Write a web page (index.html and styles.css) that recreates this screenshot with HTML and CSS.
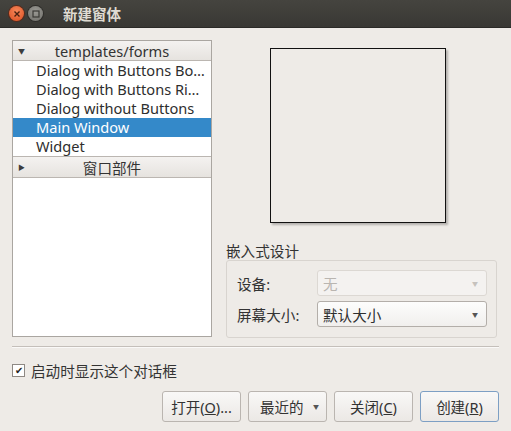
FILE: index.html
```html
<!DOCTYPE html>
<html lang="zh-CN">
<head>
    <meta charset="UTF-8">
    <title>新建窗体</title>
    <link rel="stylesheet" href="styles.css">
</head>
<body>

    <div class="titlebar">
        <span class="win-btn close">
            <svg width="8" height="8" viewBox="0 0 8 8"><path d="M1.5 1.5 L6.5 6.5 M6.5 1.5 L1.5 6.5" stroke="#4a2010" stroke-width="1.4"/></svg>
        </span>
        <span class="win-btn restore">
            <svg width="8" height="8" viewBox="0 0 8 8"><rect x="1" y="1" width="6" height="6" fill="none" stroke="#3a3935" stroke-width="1.2"/></svg>
        </span>
        <span class="title">新建窗体</span>
    </div>

    <div class="content">
        <div class="top">
            <div class="tree">
                <div class="tree-head">
                    <span class="arrow">&#9660;</span>
                    <span class="head-text">templates/forms</span>
                </div>
                <div class="tree-item">Dialog with Buttons Bo…</div>
                <div class="tree-item">Dialog with Buttons Ri…</div>
                <div class="tree-item">Dialog without Buttons</div>
                <div class="tree-item selected">Main Window</div>
                <div class="tree-item">Widget</div>
                <div class="tree-head">
                    <span class="arrow">&#9654;</span>
                    <span class="head-text">窗口部件</span>
                </div>
            </div>

            <div class="side">
                <div class="preview-wrap">
                    <div class="preview"></div>
                </div>
                <div class="group-title">嵌入式设计</div>
                <div class="group">
                    <div class="form-row">
                        <span class="label">设备:</span>
                        <div class="combo disabled">
                            <span>无</span>
                            <span class="drop">&#9660;</span>
                        </div>
                    </div>
                    <div class="form-row">
                        <span class="label">屏幕大小:</span>
                        <div class="combo">
                            <span>默认大小</span>
                            <span class="drop">&#9660;</span>
                        </div>
                    </div>
                </div>
            </div>
        </div>

        <div class="separator"></div>

        <label class="check-row">
            <span class="checkbox">&#10004;</span>
            <span>启动时显示这个对话框</span>
        </label>

        <div class="buttons">
            <button>打开(<u>O</u>)...</button>
            <button class="menu-btn"><span>最近的</span><span class="drop">&#9660;</span></button>
            <button>关闭(<u>C</u>)</button>
            <button class="default">创建(<u>R</u>)</button>
        </div>
    </div>

</body>
</html>
```

FILE: styles.css
```css
body {
    margin: 0;
    width: 511px;
    height: 431px;
    overflow: hidden;
    background-color: #eeebe7;
    font-family: "Noto Sans", "Noto Sans CJK SC", sans-serif;
    font-size: 14.6px;
    color: #3c3c3c;
}
.titlebar {
    height: 28px;
    display: flex;
    align-items: center;
    padding-left: 9px;
    background: linear-gradient(#45443f, #393834);
    border-bottom: 1px solid #2b2a27;
    box-sizing: border-box;
}
.win-btn {
    width: 15px;
    height: 15px;
    border-radius: 50%;
    display: flex;
    align-items: center;
    justify-content: center;
    margin-right: 4px;
}
.close {
    background: radial-gradient(circle at 50% 35%, #f6875a, #dd4d1f);
    box-shadow: 0 0 0 1px #5a2a1a;
}
.restore {
    background: radial-gradient(circle at 50% 35%, #9a9994, #6f6e69);
    box-shadow: 0 0 0 1px #2e2d2a;
}
.title {
    margin-left: 16px;
    color: #dfdbd2;
    font-size: 14.5px;
    font-weight: bold;
}
.content {
    padding: 12px 12px 0 12px;
}
.top {
    display: flex;
    gap: 14px;
}
.tree {
    width: 200px;
    height: 297px;
    box-sizing: border-box;
    border: 1px solid #aaa6a1;
    background-color: #ffffff;
}
.tree-head {
    height: 19px;
    display: flex;
    align-items: center;
    position: relative;
    background: linear-gradient(#f4f2f0, #e6e3df);
    border-bottom: 1px solid #bbb6b1;
    color: #333333;
}
.tree-item + .tree-head {
    border-top: 1px solid #bbb6b1;
    height: 20px;
}
.arrow {
    position: absolute;
    left: 5px;
    font-size: 7px;
    color: #3c3c3c;
}
.head-text {
    flex: 1;
    text-align: center;
}
.tree-item {
    height: 19px;
    line-height: 19px;
    padding-left: 23px;
    color: #2e2e2e;
    white-space: nowrap;
}
.tree-item.selected {
    background-color: #3489c9;
    color: #ffffff;
}
.side {
    flex: 1;
    display: flex;
    flex-direction: column;
    padding-right: 2px;
}
.preview-wrap {
    display: flex;
    justify-content: center;
    padding: 8px 8px 0 0;
    height: 194px;
    box-sizing: border-box;
}
.preview {
    width: 176px;
    height: 175px;
    box-sizing: border-box;
    border: 1px solid #111111;
    box-shadow: 2px 2px 2px rgba(0, 0, 0, 0.25);
}
.group-title {
    margin-top: 8px;
    height: 18px;
    line-height: 18px;
    color: #333333;
}
.group {
    height: 78px;
    box-sizing: border-box;
    border: 1px solid #d8d4cf;
    border-radius: 3px;
    padding: 9px 9px 0 10px;
    display: flex;
    flex-direction: column;
    gap: 5px;
}
.form-row {
    display: flex;
    align-items: center;
}
.label {
    width: 80px;
    color: #333333;
}
.combo {
    flex: 1;
    height: 26px;
    box-sizing: border-box;
    border: 1px solid #b3aea9;
    border-radius: 3px;
    background: linear-gradient(#fdfdfc, #f1efed);
    display: flex;
    align-items: center;
    justify-content: space-between;
    padding: 0 8px 0 5px;
    color: #2e2e2e;
}
.combo.disabled {
    color: #b9b5b0;
    border-color: #dcd8d3;
    background: #f4f2f0;
}
.drop {
    font-size: 6px;
    color: #555555;
}
.combo.disabled .drop {
    color: #c6c2bd;
}
.separator {
    margin-top: 8px;
    border-top: 1px solid #c4bfba;
    border-bottom: 1px solid #faf9f8;
}
.check-row {
    display: flex;
    align-items: center;
    gap: 6px;
    margin-top: 14px;
    height: 16px;
    color: #333333;
}
.checkbox {
    width: 13px;
    height: 13px;
    box-sizing: border-box;
    border: 1px solid #8e8984;
    background-color: #ffffff;
    font-size: 10px;
    line-height: 11px;
    text-align: center;
    color: #222222;
}
.buttons {
    display: flex;
    justify-content: flex-end;
    gap: 7px;
    margin-top: 13px;
}
button {
    width: 79px;
    height: 31px;
    font-family: inherit;
    font-size: 14.5px;
    color: #333333;
    border: 1px solid #bab5b0;
    border-radius: 3px;
    background: linear-gradient(#f9f8f7, #ebe8e5);
    padding: 0;
}
button.menu-btn {
    display: flex;
    align-items: center;
    justify-content: space-between;
    padding: 0 7px 0 11px;
}
button.default {
    border-color: #7d9fc4;
}
```
